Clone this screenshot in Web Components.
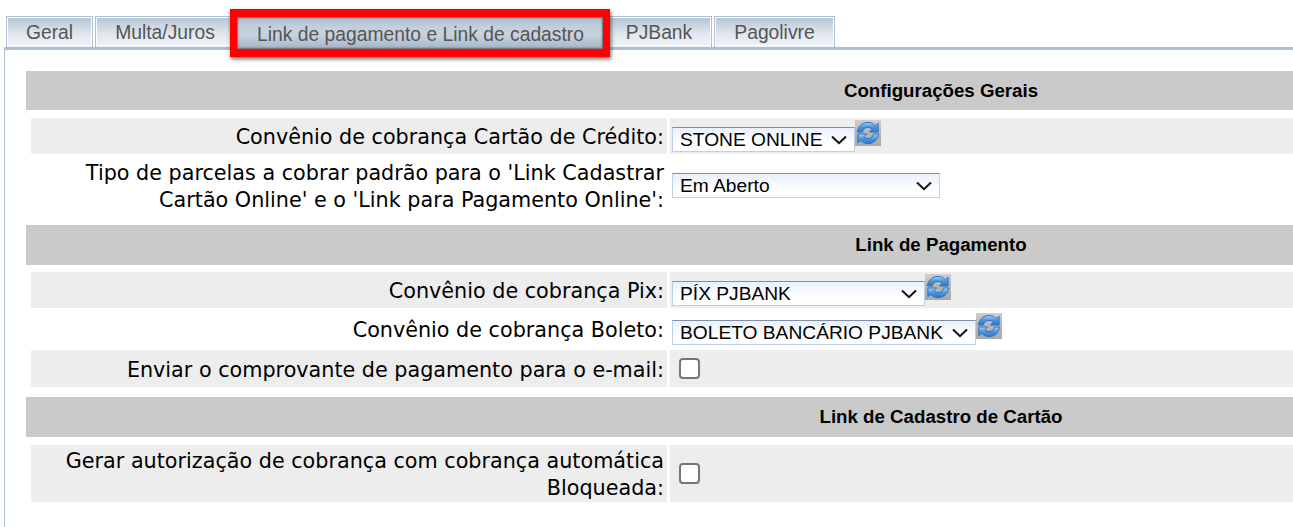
<!DOCTYPE html>
<html lang="pt">
<head>
<meta charset="utf-8">
<title>Configurações</title>
<style>
  html, body { margin: 0; padding: 0; background: #fff; overflow: hidden; }
  body { font-family: "Liberation Sans", Arial, sans-serif; }
</style>
</head>
<body>
<config-page>
  <tab-bar>
    <tab-item style="--w:87px">Geral</tab-item>
    <tab-item style="--w:140px">Multa/Juros</tab-item>
    <tab-item active style="--w:367px">Link de pagamento e Link de cadastro</tab-item>
    <tab-item style="--w:106px">PJBank</tab-item>
    <tab-item style="--w:121px">Pagolivre</tab-item>
  </tab-bar>
  <form-panel>
    <section-head h="39">Configurações Gerais</section-head>
    <form-row shade h="36" top="8" label="Convênio de cobrança Cartão de Crédito:">
      <combo-box w="183" top="9" value="STONE ONLINE"></combo-box><refresh-icon top="2"></refresh-icon>
    </form-row>
    <form-row flush h="53" top="6" label="Tipo de parcelas a cobrar padrão para o 'Link Cadastrar Cartão Online' e o 'Link para Pagamento Online':">
      <combo-box w="268" top="13" value="Em Aberto"></combo-box>
    </form-row>
    <section-head h="40" top="12">Link de Pagamento</section-head>
    <form-row shade h="36" top="7" label="Convênio de cobrança Pix:">
      <combo-box w="253" top="9" value="PÍX PJBANK"></combo-box><refresh-icon top="2"></refresh-icon>
    </form-row>
    <form-row h="34" top="4" label="Convênio de cobrança Boleto:">
      <combo-box w="304" top="8" value="BOLETO BANCÁRIO PJBANK"></combo-box><refresh-icon top="1"></refresh-icon>
    </form-row>
    <form-row shade h="37" top="4" label="Enviar o comprovante de pagamento para o e-mail:">
      <check-box></check-box>
    </form-row>
    <section-head h="40" top="10">Link de Cadastro de Cartão</section-head>
    <form-row shade h="57" top="8" label="Gerar autorização de cobrança com cobrança automática Bloqueada:">
      <check-box></check-box>
    </form-row>
  </form-panel>
</config-page>
<script>
class ConfigPage extends HTMLElement {
  constructor(){
    super();
    this.attachShadow({mode: 'open'});
    this.shadowRoot.innerHTML = `
      <style>
        :host { display: block; width: 1293px; height: 527px; padding-top: 16px; box-sizing: border-box; overflow: hidden; }
      </style>
      <slot></slot>`;
  }
}

class TabBar extends HTMLElement {
  constructor(){
    super();
    this.attachShadow({mode: 'open'});
    this.shadowRoot.innerHTML = `
      <style>
        :host { display: flex; height: 34px; gap: 2px; box-sizing: border-box; border-bottom: 3px solid #aebfd0; margin-left: 4px; padding-left: 2px; }
      </style>
      <slot></slot>`;
  }
}

class TabItem extends HTMLElement {
  constructor(){
    super();
    this.attachShadow({mode: 'open'});
    this.shadowRoot.innerHTML = `
      <style>
        :host { display: block; width: var(--w); height: 31px; box-sizing: border-box; position: relative; }
        .t { height: 31px; box-sizing: border-box; border: 1px solid #aebfd0; border-bottom: 0; outline: 1px solid #fff; outline-offset: -2px;
             background: linear-gradient(#b4c4d4, #e4eaf0 62%, #edf1f5); color: #555; font-size: 19.3px; padding-top: 2px;
             display: flex; align-items: center; justify-content: center; white-space: nowrap; }
        :host([active]) { z-index: 2; }
        :host([active]) .t { position: absolute; left: -7px; right: -6px; top: -7px; height: 48px; border: solid #f00; border-width: 8px 7px 8px 7px; outline: 0;
             background: linear-gradient(#a9bacb, #c2cfdb 30%, #c8d3de 55%, #a4b5c6); padding: 4px 0 0 1px;
             box-shadow: 1px 2px 4px rgba(0,0,0,.6), inset 0 0 2px 1px #667; }
      </style>
      <div class="t"><slot></slot></div>`;
  }
}

class FormPanel extends HTMLElement {
  constructor(){
    super();
    this.attachShadow({mode: 'open'});
    this.shadowRoot.innerHTML = `
      <style>
        :host { display: block; margin-left: 4px; border-left: 1px solid #aebfd0; padding: 21px 0 0 21px; height: 477px; box-sizing: border-box; }
      </style>
      <slot></slot>`;
  }
}

class SectionHead extends HTMLElement {
  constructor(){
    super();
    this.attachShadow({mode: 'open'});
    this.shadowRoot.innerHTML = `
      <style>
        :host { display: flex; align-items: center; justify-content: center; background: #cacaca; color: #000;
                font-weight: bold; font-size: 18.7px; box-sizing: border-box; padding-left: 563px; }
      </style>
      <slot></slot>`;
  }
  connectedCallback(){
    this.style.height = this.getAttribute('h') + 'px';
    this.style.marginTop = (this.getAttribute('top') || 0) + 'px';
  }
}

class FormRow extends HTMLElement {
  constructor(){
    super();
    this.attachShadow({mode: 'open'});
    this.shadowRoot.innerHTML = `
      <style>
        :host { display: grid; grid-template-columns: 636px 1fr; column-gap: 3px; margin-left: 5px; color: #000; }
        .label { font-family: "DejaVu Sans", Verdana, sans-serif; font-size: 20.72px; line-height: 27px; text-align: right; padding: 3px 3px 0 10px; box-sizing: border-box;
                 display: flex; align-items: center; justify-content: flex-end; }
        :host([flush]) .label { padding-top: 0; }
        .value { display: flex; align-items: center; padding-left: 2px; }
        :host([shade]) .label, :host([shade]) .value { background: #ededed; }
      </style>
      <div class="label"></div>
      <div class="value"><slot></slot></div>`;
  }
  connectedCallback(){
    this.shadowRoot.querySelector('.label').textContent = this.getAttribute('label');
    this.style.height = this.getAttribute('h') + 'px';
    this.style.marginTop = (this.getAttribute('top') || 0) + 'px';
  }
}

class ComboBox extends HTMLElement {
  constructor(){
    super();
    this.attachShadow({mode: 'open'});
    this.shadowRoot.innerHTML = `
      <style>
        :host { display: flex; align-items: center; justify-content: space-between; box-sizing: border-box; height: 25px; align-self: flex-start;
                border: 1px solid; border-color: #7f8fab #b9d0ee #b9d0ee #b9d0ee; background: linear-gradient(#eaf1fb, #fff 75%);
                padding: 0 7px 0 7px; font-size: 19.2px; color: #000; white-space: nowrap; }
        svg { flex: none; margin-left: 8px; }
      </style>
      <span></span>
      <svg width="16" height="10" viewBox="0 0 16 10"><path d="M1 1.500 8 8.200 15 1.500" fill="none" stroke="#111" stroke-width="2"/></svg>`;
  }
  connectedCallback(){
    this.style.width = this.getAttribute('w') + 'px';
    this.style.marginTop = this.getAttribute('top') + 'px';
    this.shadowRoot.querySelector('span').textContent = this.getAttribute('value');
  }
}

class RefreshIcon extends HTMLElement {
  constructor(){
    super();
    this.attachShadow({mode: 'open'});
    this.shadowRoot.innerHTML = `
      <style>
        :host { display: block; width: 26px; height: 26px; background: linear-gradient(#cfcfcf, #b8b8b8 40%, #a9a9a9); align-self: flex-start; }
        svg { display: block; }
      </style>
      <svg width="26" height="26" viewBox="0 0 26 26">
        <defs>
          <linearGradient id="g" x1="0" y1="0" x2="0" y2="1"><stop offset="0" stop-color="#a6cff2"/><stop offset=".5" stop-color="#4b95e0"/><stop offset="1" stop-color="#2f78c8"/></linearGradient>
        </defs>
        <g transform="translate(1 1) scale(.923)">
          <path d="M1.500 12C2 6 7 1.500 13 1.500c3.500 0 6 1.500 8 3.500l3-2.500V12h-9.500l3-3C16 7.500 14.500 7 13 7c-3.500 0-5.500 2-6 5Z" fill="url(#g)" stroke="#2a70c0"/>
          <path d="M24.500 14C24 20 19 24.500 13 24.500c-3.500 0-6-1.500-8-3.500l-3 2.500V14h9.500l-3 3c1.500 1.500 3 2 4.500 2 3.500 0 5.500-2 6-5Z" fill="url(#g)" stroke="#2a70c0"/>
        </g>
      </svg>`;
  }
  connectedCallback(){
    this.style.marginTop = this.getAttribute('top') + 'px';
  }
}

class CheckBox extends HTMLElement {
  constructor(){
    super();
    this.attachShadow({mode: 'open'});
    this.shadowRoot.innerHTML = `
      <style>
        :host { display: block; width: 21px; height: 21px; margin-left: 7px; box-sizing: border-box; border: 2px solid #767676; border-radius: 4px; background: #fff; }
      </style>`;
  }
}

customElements.define('config-page', ConfigPage);
customElements.define('tab-bar', TabBar);
customElements.define('tab-item', TabItem);
customElements.define('form-panel', FormPanel);
customElements.define('section-head', SectionHead);
customElements.define('form-row', FormRow);
customElements.define('combo-box', ComboBox);
customElements.define('refresh-icon', RefreshIcon);
customElements.define('check-box', CheckBox);
</script>
</body>
</html>
